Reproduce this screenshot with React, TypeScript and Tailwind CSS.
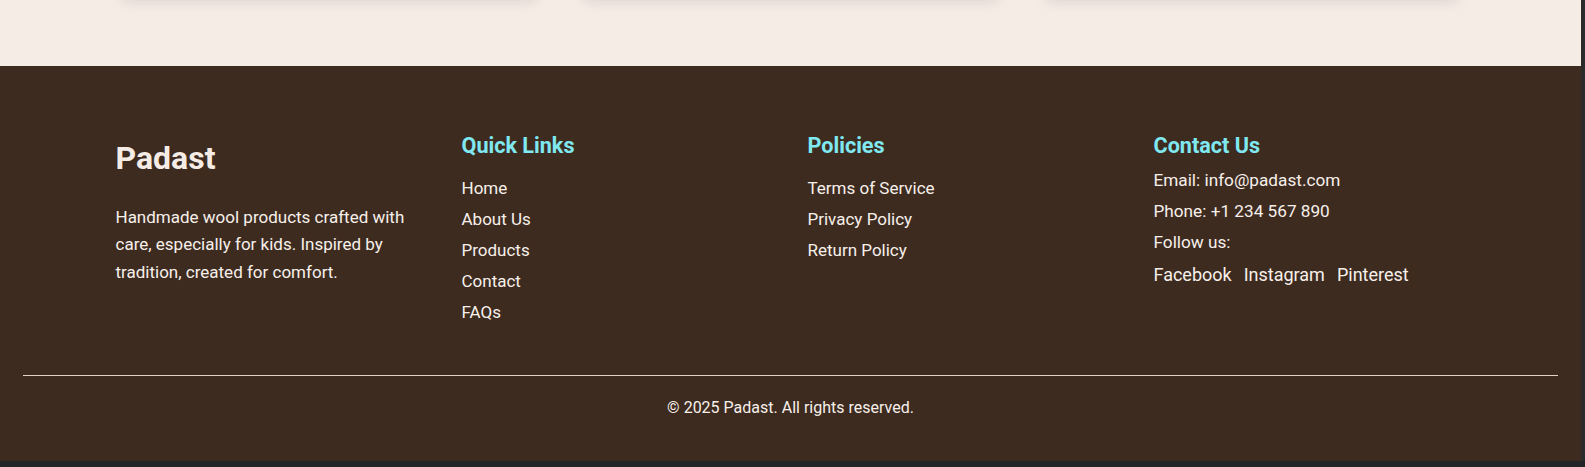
export default function App() {
  const quickLinks = ["Home", "About Us", "Products", "Contact", "FAQs"];
  const policies = ["Terms of Service", "Privacy Policy", "Return Policy"];
  const socials = ["Facebook", "Instagram", "Pinterest"];

  return (
    <div className="flex h-[467px] w-full flex-col bg-[#222427] font-['Roboto',sans-serif]">
      <div className="flex flex-1">
        <div className="flex flex-1 flex-col">
          {/* Tail of the previous section */}
          <section className="h-[66px] overflow-hidden bg-[#f5ece6]">
            <div className="mx-auto grid max-w-[1340px] grid-cols-3 gap-[45px]">
              <div className="mt-[-101px] h-[100px] rounded-lg bg-[#f3eae4] shadow-[0_4px_12px_rgba(60,40,30,0.10)]" />
              <div className="mt-[-101px] h-[100px] rounded-lg bg-[#f3eae4] shadow-[0_4px_12px_rgba(60,40,30,0.10)]" />
              <div className="mt-[-101px] h-[100px] rounded-lg bg-[#f3eae4] shadow-[0_4px_12px_rgba(60,40,30,0.10)]" />
            </div>
          </section>

          {/* Footer */}
          <footer className="flex-1 bg-[#3d2b20] px-[23px] pt-[64px] text-[#f7f0ea]">
            <div className="mx-auto grid max-w-[1352px] grid-cols-[346px_346px_346px_1fr] pl-[1px]">
              <div className="pr-8">
                <h2 className="mt-[10px] text-[32px] font-bold leading-[36px] text-[#f5ece6]">
                  Padast
                </h2>
                <p className="mt-[28px] text-[17px] leading-[27.4px]">
                  Handmade wool products crafted with care, especially for kids. Inspired by tradition,
                  created for comfort.
                </p>
              </div>

              <div className="pr-8">
                <h3 className="mt-[2px] text-[21.6px] font-bold leading-[28px] text-[#7fe8f1]">
                  Quick Links
                </h3>
                <ul className="mt-[16px] flex flex-col gap-[7px]">
                  {quickLinks.map((l) => (
                    <li key={l} className="text-[17px] leading-[24px]">
                      <a href="#">{l}</a>
                    </li>
                  ))}
                </ul>
              </div>

              <div className="pr-8">
                <h3 className="mt-[2px] text-[21.6px] font-bold leading-[28px] text-[#7fe8f1]">
                  Policies
                </h3>
                <ul className="mt-[16px] flex flex-col gap-[7px]">
                  {policies.map((l) => (
                    <li key={l} className="text-[17px] leading-[24px]">
                      <a href="#">{l}</a>
                    </li>
                  ))}
                </ul>
              </div>

              <div>
                <h3 className="mt-[2px] text-[21.6px] font-bold leading-[28px] text-[#7fe8f1]">
                  Contact Us
                </h3>
                <div className="mt-[8px] flex flex-col gap-[7px] text-[17.2px] leading-[24px]">
                  <p>Email: info@padast.com</p>
                  <p>Phone: +1 234 567 890</p>
                  <p>Follow us:</p>
                  <div className="mt-[2px] flex gap-3 text-[18px] leading-[24px]">
                    {socials.map((s) => (
                      <a key={s} href="#">
                        {s}
                      </a>
                    ))}
                  </div>
                </div>
              </div>
            </div>

            <div className="mt-[51px] border-t border-[#e3d2c5] pt-[20px] text-center text-[16px] leading-[24px]">
              © 2025 Padast. All rights reserved.
            </div>
          </footer>
        </div>
        <div className="w-[4px] bg-[#2b2b2b]" />
      </div>
      <div className="h-[6px] bg-[#222427]" />
    </div>
  );
}
